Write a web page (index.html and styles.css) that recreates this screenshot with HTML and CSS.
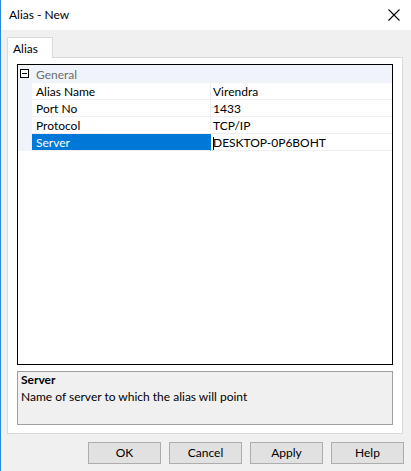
FILE: index.html
```html
<!DOCTYPE html>
<html>
<head>
<meta charset="utf-8">
<link rel="stylesheet" href="styles.css">
</head>
<body>
<div class="window">
  <div class="titlebar">
    <span class="title">Alias - New</span>
    <svg class="close" width="12" height="12" viewBox="0 0 12 12"><path d="M0.5 0.5 L11.5 11.5 M11.5 0.5 L0.5 11.5" stroke="#000" stroke-width="1.1" fill="none"/></svg>
  </div>
  <div class="client">
    <div class="tabs">
      <div class="tab">Alias</div>
    </div>
    <div class="panel">
      <div class="grid">
        <div class="cat-row">
          <div class="toggle"><span class="minus"></span></div>
          <div class="cat-label">General</div>
        </div>
        <div class="prop-row">
          <div class="margin"></div>
          <div class="name">Alias Name</div>
          <div class="value">Virendra</div>
        </div>
        <div class="prop-row">
          <div class="margin"></div>
          <div class="name">Port No</div>
          <div class="value">1433</div>
        </div>
        <div class="prop-row">
          <div class="margin"></div>
          <div class="name">Protocol</div>
          <div class="value">TCP/IP</div>
        </div>
        <div class="prop-row selected">
          <div class="margin"></div>
          <div class="name">Server</div>
          <div class="value"><span class="caret"></span>DESKTOP-0P6BOHT</div>
        </div>
      </div>
      <div class="desc">
        <div class="desc-title">Server</div>
        <div class="desc-text">Name of server to which the alias will point</div>
      </div>
    </div>
    <div class="buttons">
      <button class="btn">OK</button>
      <button class="btn">Cancel</button>
      <button class="btn">Apply</button>
      <button class="btn">Help</button>
    </div>
  </div>
</div>
</body>
</html>
```

FILE: styles.css
```css
html, body {
  margin: 0;
  padding: 0;
}
body {
  width: 411px;
  height: 471px;
  overflow: hidden;
  font-family: "Lato", "Noto Sans", sans-serif;
  font-size: 12px;
  color: #000;
}
.window {
  width: 411px;
  height: 471px;
  box-sizing: border-box;
  border-left: 1px solid #2b88d8;
  display: flex;
  flex-direction: column;
  background: #f0f0f0;
}
.titlebar {
  height: 30px;
  flex: none;
  background: #fff;
  display: flex;
  align-items: center;
  justify-content: space-between;
  padding: 0 11px 0 8px;
}
.title {
  font-size: 12px;
  line-height: 16px;
  margin-top: -1px;
}
.close {
  display: block;
  margin-top: -1px;
}
.client {
  flex: 1;
  padding: 7px 7px 0 6px;
  display: flex;
  flex-direction: column;
}
.tabs {
  display: flex;
  height: 20px;
}
.tab {
  width: 46px;
  box-sizing: border-box;
  border: 1px solid #d9d9d9;
  border-bottom: none;
  background: #fff;
  padding: 3px 0 0 5px;
  line-height: 16px;
  position: relative;
  z-index: 1;
  margin-bottom: -1px;
  height: 21px;
}
.panel {
  width: 396px;
  height: 377px;
  box-sizing: border-box;
  border: 1px solid #d9d9d9;
  background: #fff;
  padding: 6px 9px 0 9px;
  display: flex;
  flex-direction: column;
  gap: 6px;
}
.grid {
  height: 301px;
  box-sizing: border-box;
  border: 1px solid #000;
  background: #fff;
  flex: none;
}
.cat-row {
  height: 18px;
  display: flex;
  background: #f0f4fa;
}
.toggle {
  width: 14px;
  flex: none;
  display: flex;
  align-items: flex-start;
  padding: 4px 0 0 2px;
  box-sizing: border-box;
}
.minus {
  width: 9px;
  height: 9px;
  box-sizing: border-box;
  border: 1px solid #000;
  background: #fff;
  position: relative;
  display: block;
}
.minus::after {
  content: "";
  position: absolute;
  left: 1px;
  right: 1px;
  top: 3px;
  height: 1px;
  background: #000;
}
.cat-label {
  color: #6d6d6d;
  padding: 1px 0 0 4px;
  line-height: 18px;
}
.prop-row {
  height: 17px;
  display: flex;
}
.prop-row .margin {
  width: 14px;
  flex: none;
  background: #f0f4fa;
}
.prop-row .name {
  width: 179px;
  flex: none;
  box-sizing: border-box;
  padding: 1px 0 0 4px;
  line-height: 16px;
  border-bottom: 1px solid #f0f0f0;
  border-right: 1px solid #f0f0f0;
}
.prop-row .value {
  flex: 1;
  box-sizing: border-box;
  padding: 2px 0 0 2px;
  line-height: 16px;
  border-bottom: 1px solid #f0f0f0;
  display: flex;
  align-items: center;
}
.prop-row.selected .name {
  background: #0078d7;
  color: #fff;
  border-right-color: #0078d7;
}
.caret {
  display: inline-block;
  width: 1px;
  height: 13px;
  background: #000;
  margin-right: -1px;
}
.desc {
  height: 54px;
  box-sizing: border-box;
  border: 1px solid #a0a0a0;
  background: #f0f0f0;
  padding: 0 0 0 3px;
  flex: none;
}
.desc-title {
  font-weight: bold;
  line-height: 16px;
}
.desc-text {
  line-height: 17px;
}
.buttons {
  display: flex;
  justify-content: flex-end;
  gap: 8px;
  padding-top: 8px;
}
.btn {
  width: 73px;
  height: 22px;
  box-sizing: border-box;
  border: 1px solid #adadad;
  background: #e1e1e1;
  font-family: "Lato", "Noto Sans", sans-serif;
  font-size: 12px;
  color: #000;
  padding: 0;
  margin: 0;
  line-height: 18px;
}
```
